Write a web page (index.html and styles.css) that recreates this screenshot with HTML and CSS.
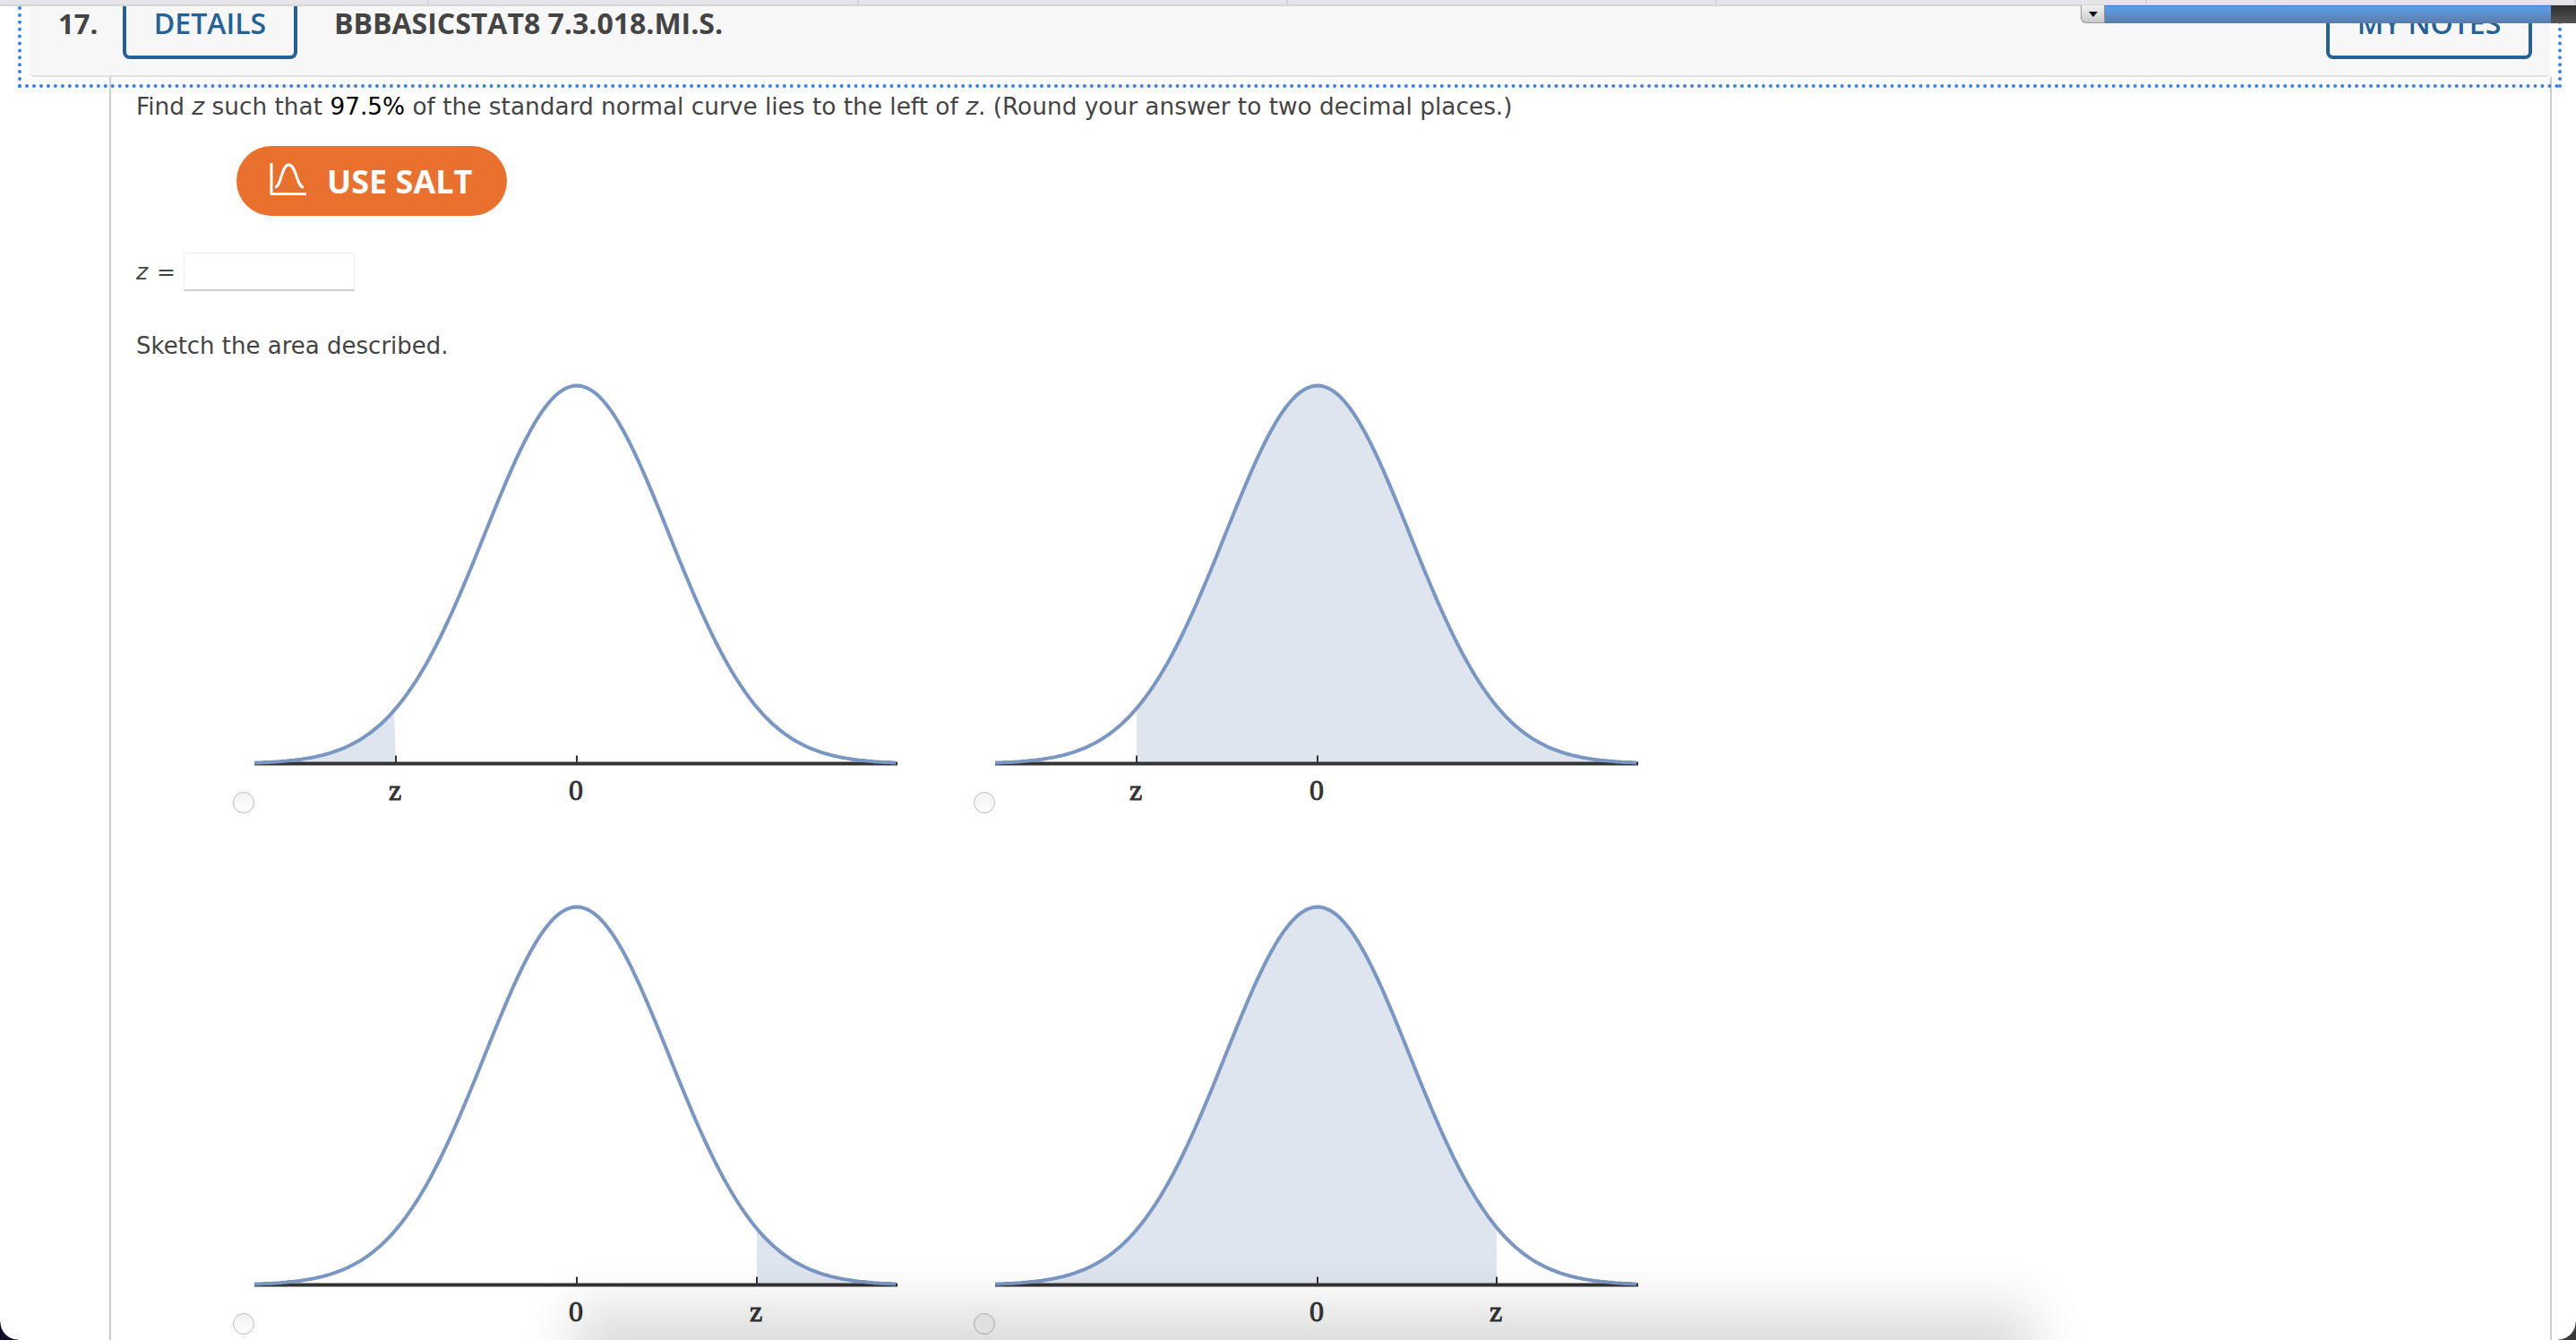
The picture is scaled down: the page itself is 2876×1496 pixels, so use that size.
FILE: index.html
```html
<!DOCTYPE html>
<html lang="en">
<head>
    <meta charset="UTF-8">
    <title>Question 17</title>
    <link rel="stylesheet" href="styles.css">
</head>
<body>
    <div class="tab-bar">
        <div class="tab"></div>
        <div class="tab"></div>
        <div class="tab"></div>
        <div class="tab"></div>
        <div class="tab"></div>
        <div class="tab"></div>
    </div>

    <div class="focus-frame">
        <div class="question-header">
            <span class="question-number">17.</span>
            <a class="outline-btn details-btn">DETAILS</a>
            <span class="question-code">BBBASICSTAT8 7.3.018.MI.S.</span>
            <a class="outline-btn notes-btn">MY NOTES</a>
        </div>
    </div>

    <div class="question-body">
        <p class="question-text">Find <i>z</i> such that <span class="strong-value">97.5%</span> of the standard normal curve lies to the left of <i>z</i>. (Round your answer to two decimal places.)</p>

        <button class="salt-btn">
            <svg class="salt-icon" viewBox="0 0 41 36">
                <path d="M2 0V34.5H41M6 27C13 27 13 2 21.5 2C30 2 30 27 38 27"></path>
            </svg>
            USE SALT
        </button>

        <div class="answer-row">
            <i class="answer-label">z</i><span class="answer-equals">=</span>
            <div class="answer-input"></div>
        </div>

        <p class="question-text sketch-text">Sketch the area described.</p>

        <div class="options">
            <label class="option">
                <input type="radio" class="option-radio" name="sketch">
                <svg class="curve-chart" viewBox="0 0 720 480" data-from="-360" data-to="-202" data-z="-202"></svg>
            </label>
            <label class="option">
                <input type="radio" class="option-radio" name="sketch">
                <svg class="curve-chart" viewBox="0 0 720 480" data-from="-202" data-to="359" data-z="-202"></svg>
            </label>
            <label class="option">
                <input type="radio" class="option-radio" name="sketch">
                <svg class="curve-chart" viewBox="0 0 720 480" data-from="201" data-to="359" data-z="201"></svg>
            </label>
            <label class="option">
                <input type="radio" class="option-radio" name="sketch">
                <svg class="curve-chart" viewBox="0 0 720 480" data-from="-360" data-to="200" data-z="200"></svg>
            </label>
        </div>
    </div>

    <!-- stuff lying over the page in the screenshot -->
    <div class="blue-strip">
        <div class="strip-arrow"><span class="strip-triangle"></span></div>
        <div class="strip-fill"></div>
        <div class="strip-dark"></div>
    </div>
    <div class="dock-shadow"></div>
    <div class="corner corner-left"></div>
    <div class="corner corner-right"></div>

    <script src="script.js"></script>
</body>
</html>
```

FILE: styles.css
```css
* {
    margin: 0;
    padding: 0;
    box-sizing: border-box;
}

body {
    position: relative;
    width: 2876px;
    height: 1496px;
    overflow: hidden;
    background: white;
    font-family: "DejaVu Sans", Verdana, sans-serif;
    color: #444;
}

.tab-bar {
    display: flex;
    height: 7px;
    background: #e5e4e9;
    border-bottom: 2px solid #d6d6d6;
}

.tab {
    width: 480px;
    border-right: 2px solid #d4d4d6;
}

.focus-frame {
    position: relative;
    z-index: 2;
    height: 91px;
    margin: 0 16px 0 20px;
    padding: 0 9px;
    border: 4px dotted #3b7fe3;
    border-top: none;
}

.question-header {
    display: flex;
    align-items: flex-start;
    height: 79px;
    padding-left: 32px;
    padding-right: 20px;
    background: #f7f7f7;
    border-bottom: 2px solid #e0e0e0;
    border-radius: 0 0 5px 5px;
    font-family: "Open Sans", sans-serif;
    line-height: 38px;
}

.question-number {
    width: 72px;
    font-size: 31px;
    font-weight: 700;
    color: #444;
}

.outline-btn {
    height: 59px;
    border: 4px solid #236196;
    border-top: none;
    border-radius: 0 0 8px 8px;
    font-size: 32px;
    font-weight: 600;
    color: #236196;
    text-align: center;
}

.details-btn {
    width: 195px;
}

.question-code {
    margin-left: 41px;
    font-size: 32px;
    font-weight: 700;
    color: #444;
}

.notes-btn {
    width: 230px;
    margin-left: auto;
}

.question-body {
    position: relative;
    height: 1410px;
    width: 2727px;
    margin: -12px 0 0 122px;
    padding: 13px 0 0 28px;
    border-left: 2px solid #ccc;
    border-right: 2px solid #ccc;
}

.question-text {
    font-size: 26.35px;
    line-height: 40px;
}

.strong-value {
    color: #000;
}

.salt-btn {
    display: flex;
    align-items: center;
    gap: 23px;
    width: 302px;
    height: 78px;
    margin: 24px 0 0 112px;
    padding-left: 37px;
    border: none;
    border-radius: 39px;
    background: #ea702e;
    color: white;
    font-family: "Open Sans", sans-serif;
    font-size: 36px;
    font-weight: 700;
}

.salt-icon {
    width: 41px;
    height: 36px;
    margin-top: -4px;
    fill: none;
    stroke: white;
    stroke-width: 3;
}

.answer-row {
    display: flex;
    align-items: center;
    height: 43px;
    margin-top: 41px;
    font-size: 25px;
}

.answer-label {
    width: 23px;
}

.answer-equals {
    width: 30px;
}

.answer-input {
    width: 191px;
    height: 43px;
    border: 1px solid #eee;
    border-bottom: 2px solid #ccc;
    background: white;
}

.sketch-text {
    margin-top: 41px;
    font-size: 26px;
}

.options {
    display: grid;
    grid-template-columns: 744px 744px;
    column-gap: 83px;
    row-gap: 102px;
    margin: 20px 0 0 108px;
}

.option {
    display: flex;
    align-items: flex-end;
}

.option-radio {
    appearance: none;
    flex: none;
    width: 24px;
    height: 24px;
    margin-bottom: -2px;
    border: 1px solid #bbb;
    border-radius: 50%;
    background: linear-gradient(#f2f2f2, #fff);
}

.curve-chart {
    display: block;
    width: 720px;
    height: 480px;
}

.chart-shade {
    fill: #dfe5ef;
}

.chart-curve {
    fill: none;
    stroke: #7a96c2;
    stroke-width: 4;
}

.chart-axis {
    stroke: #333;
    stroke-width: 4;
}

.chart-tick {
    stroke: #333;
    stroke-width: 2;
}

.chart-label {
    font-family: "Liberation Serif", serif;
    font-size: 32px;
    fill: #333;
    stroke: #333;
    stroke-width: 0.9;
    text-anchor: middle;
}

.blue-strip {
    position: absolute;
    top: 6px;
    left: 2323px;
    right: 0;
    z-index: 3;
    display: flex;
    height: 20px;
}

.strip-arrow {
    display: flex;
    align-items: center;
    justify-content: center;
    width: 27px;
    border: 1px solid #999;
    border-top: none;
    border-radius: 0 0 0 6px;
    background: linear-gradient(#f2f2f2, #c9c9c9);
}

.strip-triangle {
    border-top: 6px solid #111;
    border-left: 5px solid transparent;
    border-right: 5px solid transparent;
}

.strip-fill {
    flex: 1;
    background: linear-gradient(#5f9de8, #5a7cab);
    border-top: 1px solid #3b78c8;
}

.strip-dark {
    width: 28px;
    background: linear-gradient(#2e2e2e, #555);
}

.dock-shadow {
    position: absolute;
    top: 1510px;
    left: 690px;
    z-index: 4;
    width: 1530px;
    height: 40px;
    box-shadow: 0 0 60px 50px rgba(0,0,0,0.14);
}

.corner {
    position: absolute;
    top: 1476px;
    z-index: 5;
    width: 20px;
    height: 20px;
}

.corner-left {
    left: 0;
    background: radial-gradient(circle at 100% 0, transparent 19px, #0d0a2a 20px);
}

.corner-right {
    right: 0;
    background: radial-gradient(circle at 0 0, transparent 19px, #3a3a3a 20px);
}
```

FILE: script.js
```js
// draws the normal curves into the svg elements
const SVG_NS = 'http://www.w3.org/2000/svg';
const MIDDLE = 360;
const AXIS_Y = 426.5;
const PEAK = 422;
const SIGMA = 103;

function curveY(offset) {
    return AXIS_Y - PEAK * Math.exp(-(offset * offset) / (2 * SIGMA * SIGMA));
}

function curvePoints(from, to) {
    const points = [];
    for (let offset = from; offset <= to; offset += 4) {
        points.push((MIDDLE + offset) + ',' + curveY(offset).toFixed(1));
    }
    return points;
}

function addShape(svg, tag, className, attrs) {
    const shape = document.createElementNS(SVG_NS, tag);
    shape.setAttribute('class', className);
    for (const name in attrs) {
        shape.setAttribute(name, attrs[name]);
    }
    svg.appendChild(shape);
    return shape;
}

function addTick(svg, offset, label) {
    const x = MIDDLE + offset;
    addShape(svg, 'line', 'chart-tick', { x1: x, x2: x, y1: AXIS_Y - 9, y2: AXIS_Y });
    addShape(svg, 'text', 'chart-label', { x: x - 1, y: AXIS_Y + 40 }).textContent = label;
}

document.querySelectorAll('.curve-chart').forEach(function(svg) {
    const from = Number(svg.dataset.from);
    const to = Number(svg.dataset.to);
    const shade = curvePoints(from, to);
    shade.push((MIDDLE + to) + ',' + AXIS_Y, (MIDDLE + from) + ',' + AXIS_Y);

    addShape(svg, 'polygon', 'chart-shade', { points: shade.join(' ') });
    addShape(svg, 'line', 'chart-axis', { x1: 0, x2: 718, y1: AXIS_Y, y2: AXIS_Y });
    addShape(svg, 'polyline', 'chart-curve', { points: curvePoints(-360, 358).join(' ') });
    addTick(svg, 0, '0');
    addTick(svg, Number(svg.dataset.z), 'z');
});
```
